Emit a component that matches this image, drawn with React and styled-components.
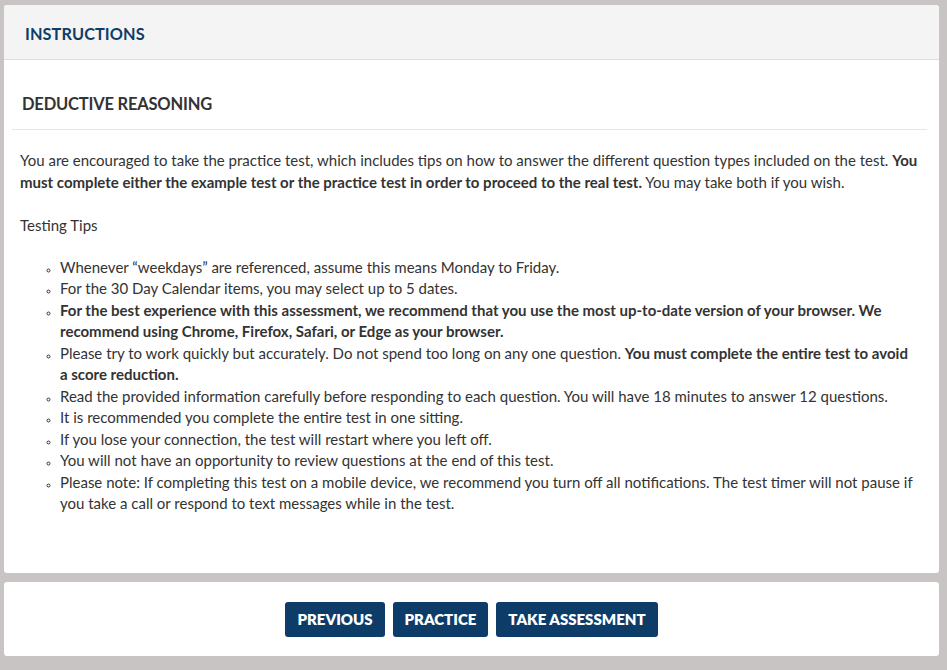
import React from "react";
import styled, { createGlobalStyle } from "styled-components";

const Global = createGlobalStyle`
  html, body { margin: 0; padding: 0; }
  body {
    background: #c8c4c4;
    font-family: Lato, "Open Sans", Arial, sans-serif;
    color: #333;
  }
`;

const Page = styled.div`
  padding: 5px 8px 14px 4px;
  display: flex;
  flex-direction: column;
  gap: 9px;
`;

const Card = styled.div`
  background: #fff;
  border-radius: 3px;
  overflow: hidden;
`;

const Header = styled.div`
  height: 55px;
  background: #f4f4f4;
  border-bottom: 1px solid #dcdcdc;
  display: flex;
  align-items: center;
  padding: 2px 0 0 21px;
  box-sizing: border-box;
`;

const HeaderTitle = styled.h1`
  margin: 0;
  font-size: 16.3px;
  font-weight: 700;
  color: #0e3d69;
  letter-spacing: 0.1px;
`;

const Body = styled.div`
  padding: 0 12px 59px 8px;
`;

const SectionTitle = styled.h2`
  margin: 0;
  padding: 34px 10px 15px;
  font-size: 16.5px;
  font-weight: 700;
  color: #333;
  border-bottom: 1px solid #e6e6e6;
  letter-spacing: -0.2px;
`;

const Content = styled.div`
  padding: 19px 8px 0;
  font-size: 15px;
  line-height: 22px;
  color: #333;
`;

const Para = styled.p`
  margin: 0 0 21px;
`;

const List = styled.ul`
  margin: 0;
  padding-left: 40px;
  list-style: circle;
  line-height: 21.45px;
  li::marker { font-size: 10px; }
`;

const Footer = styled(Card)`
  height: 74px;
  display: flex;
  align-items: center;
  justify-content: center;
  gap: 8px;
`;

const Button = styled.button`
  height: 35px;
  padding: 0 12px;
  background: #0d3c69;
  color: #fff;
  border: none;
  border-radius: 3px;
  font-family: Lato, "Open Sans", Arial, sans-serif;
  font-size: 15px;
  font-weight: 800;
  cursor: pointer;
`;

export default function App() {
  return (
    <>
      <Global />
      <Page>
        <Card>
          <Header>
            <HeaderTitle>INSTRUCTIONS</HeaderTitle>
          </Header>
          <Body>
            <SectionTitle>DEDUCTIVE REASONING</SectionTitle>
            <Content>
              <Para>
                You are encouraged to take the practice test, which includes tips on how to answer the different question types included on the test.{" "}
                <b>You must complete either the example test or the practice test in order to proceed to the real test.</b>{" "}
                You may take both if you wish.
              </Para>
              <Para>Testing Tips</Para>
              <List>
                <li>Whenever “weekdays” are referenced, assume this means Monday to Friday.</li>
                <li>For the 30 Day Calendar items, you may select up to 5 dates.</li>
                <li>
                  <b>For the best experience with this assessment, we recommend that you use the most up-to-date version of your browser. We recommend using Chrome, Firefox, Safari, or Edge as your browser.</b>
                </li>
                <li>
                  Please try to work quickly but accurately. Do not spend too long on any one question.{" "}
                  <b>You must complete the entire test to avoid a score reduction.</b>
                </li>
                <li>Read the provided information carefully before responding to each question. You will have 18 minutes to answer 12 questions.</li>
                <li>It is recommended you complete the entire test in one sitting.</li>
                <li>If you lose your connection, the test will restart where you left off.</li>
                <li>You will not have an opportunity to review questions at the end of this test.</li>
                <li>Please note: If completing this test on a mobile device, we recommend you turn off all notifications. The test timer will not pause if you take a call or respond to text messages while in the test.</li>
              </List>
            </Content>
          </Body>
        </Card>
        <Footer>
          <Button>PREVIOUS</Button>
          <Button>PRACTICE</Button>
          <Button>TAKE ASSESSMENT</Button>
        </Footer>
      </Page>
    </>
  );
}
